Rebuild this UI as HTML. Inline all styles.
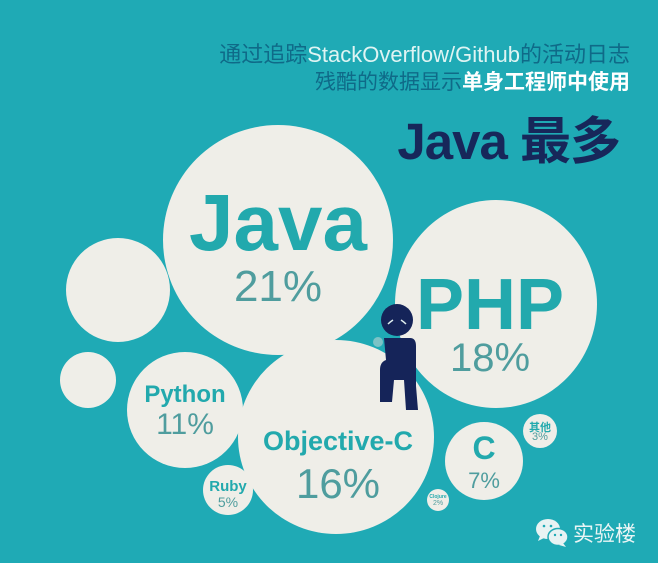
<!DOCTYPE html>
<html><head><meta charset="utf-8"><style>
body{margin:0;width:658px;height:563px;overflow:hidden;background:#1faab5;font-family:"Liberation Sans","Noto Sans CJK SC",sans-serif;position:relative}
.c{position:absolute;border-radius:50%;background:#efeee8}
.t{position:absolute;text-align:center;white-space:nowrap}
.b{font-weight:bold;color:#22a9ad}
.p{color:#4f9d9e;font-weight:300}
</style></head><body>
<div class="t" style="right:28px;top:37px;font-size:22px;color:#0f6a88">通过追踪<span style="color:#dff4f3">StackOverflow/Github</span>的活动日志</div>
<div class="t" style="right:28px;top:66px;font-size:21px;color:#0f6a88">残酷的数据显示<b style="color:#fff">单身工程师中使用</b></div>
<div class="t" style="right:38px;top:100px;font-size:51px;font-weight:bold;color:#17275a;letter-spacing:-1px">Java 最多</div>

<div class="c" style="left:66px;top:238px;width:104px;height:104px"></div>
<div class="c" style="left:60px;top:352px;width:56px;height:56px"></div>
<div class="c" style="left:163px;top:125px;width:230px;height:230px"></div>
<div class="c" style="left:395px;top:200px;width:202px;height:208px"></div>
<div class="c" style="left:127px;top:352px;width:116px;height:116px"></div>
<div class="c" style="left:238px;top:340px;width:196px;height:194px"></div>
<div class="c" style="left:203px;top:465px;width:50px;height:50px"></div>
<div class="c" style="left:445px;top:422px;width:78px;height:78px"></div>
<div class="c" style="left:523px;top:414px;width:34px;height:34px"></div>
<div class="c" style="left:427px;top:489px;width:22px;height:22px"></div>

<div class="t b" style="left:163px;width:230px;top:183px;font-size:80px;line-height:80px">Java</div>
<div class="t p" style="left:163px;width:230px;top:262px;font-size:44px">21%</div>
<div class="t b" style="left:395px;width:190px;top:268px;font-size:72px;line-height:74px">PHP</div>
<div class="t p" style="left:395px;width:190px;top:336px;font-size:40px">18%</div>
<div class="t b" style="left:127px;width:116px;top:381px;font-size:24px">Python</div>
<div class="t p" style="left:127px;width:116px;top:408px;font-size:30px">11%</div>
<div class="t b" style="left:240px;width:196px;top:426px;font-size:27px">Objective-C</div>
<div class="t p" style="left:240px;width:196px;top:460px;font-size:42px">16%</div>
<div class="t b" style="left:445px;width:78px;top:430px;font-size:32px">C</div>
<div class="t p" style="left:445px;width:78px;top:468px;font-size:22px">7%</div>
<div class="t b" style="left:203px;width:50px;top:478px;font-size:15px">Ruby</div>
<div class="t p" style="left:203px;width:50px;top:494px;font-size:14px">5%</div>
<div class="t b" style="left:523px;width:34px;top:419px;font-size:11px">其他</div>
<div class="t p" style="left:523px;width:34px;top:431px;font-size:11px">3%</div>
<div class="t b" style="left:427px;width:22px;top:494px;font-size:5px">Clojure</div>
<div class="t p" style="left:427px;width:22px;top:500px;font-size:7px">2%</div>

<svg style="position:absolute;left:360px;top:300px" width="60" height="110" viewBox="0 0 60 110">
<circle cx="37" cy="20" r="16" fill="#152459"/>
<path d="M33 20 q-3 2 -5 4 M41 20 q3 2 5 4" stroke="#dfeeee" stroke-width="1.5" fill="none"/>
<circle cx="18" cy="42" r="5" fill="#7cc3c6"/>
<path d="M24 38 h26 q6 0 6 8 v40 l2 24 h-12 l-2 -30 h-10 l-2 22 h-12 l0 -32 q0 -8 6 -10 z" fill="#152459"/>
</svg>

<svg style="position:absolute;left:535px;top:518px" width="34" height="30" viewBox="0 0 34 30">
<ellipse cx="13" cy="11" rx="12" ry="10" fill="#e8f3f3"/>
<path d="M5 18 l-2 5 l6 -3z" fill="#e8f3f3"/>
<ellipse cx="23" cy="19" rx="10" ry="8.5" fill="#e8f3f3" stroke="#1faab5" stroke-width="1.5"/>
<path d="M28 25 l3 4 l-7 -2z" fill="#e8f3f3"/>
<circle cx="9" cy="8" r="1.3" fill="#1faab5"/><circle cx="16" cy="8" r="1.3" fill="#1faab5"/>
<circle cx="20" cy="17" r="1.2" fill="#1faab5"/><circle cx="26" cy="17" r="1.2" fill="#1faab5"/>
</svg>
<div class="t" style="left:573px;top:518px;font-size:21px;color:#eaf5f5">实验楼</div>
</body></html>
